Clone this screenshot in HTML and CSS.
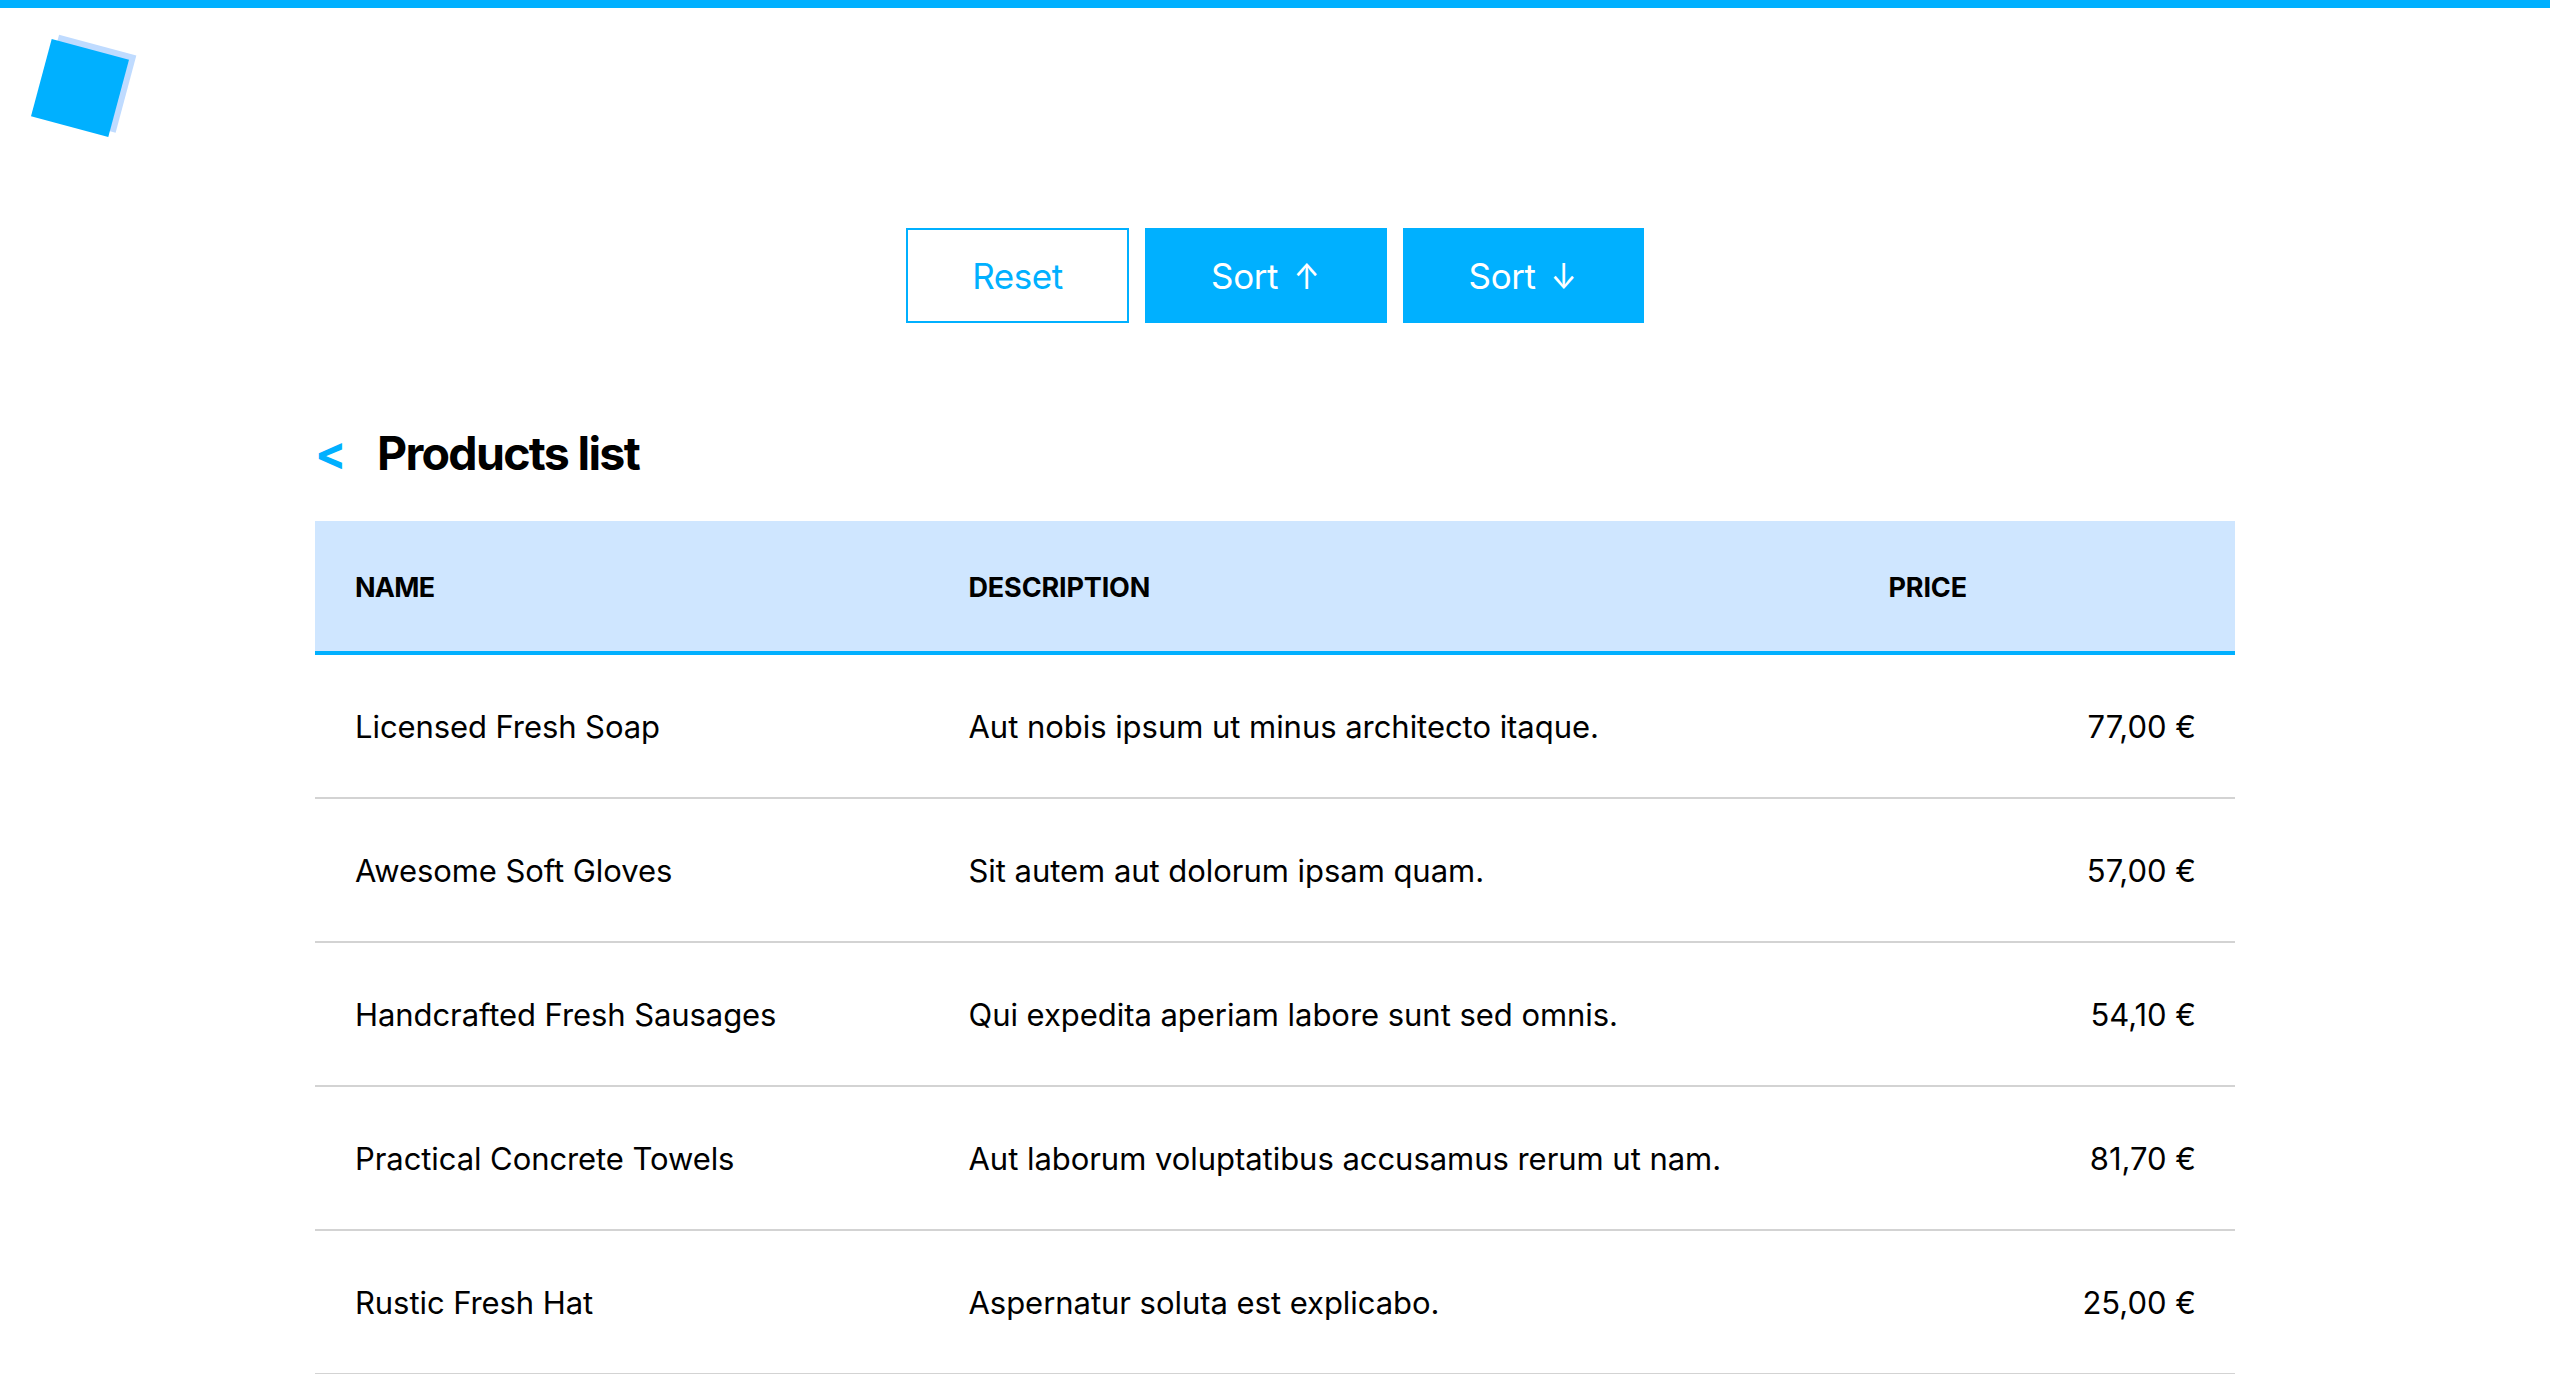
FILE: index.html
```
<!DOCTYPE html>
<html lang="en">
<head>
<meta charset="utf-8">
<title>Products list</title>
<link rel="stylesheet" href="styles.css">
</head>
<body>
<header class="header">
  <a class="logo" href="#" aria-label="Home"></a>
</header>
<main class="container">
  <div class="actions">
    <button class="button button-outline" type="button">Reset</button>
    <button class="button" type="button">Sort <span class="arrow">↑</span></button>
    <button class="button" type="button">Sort <span class="arrow">↓</span></button>
  </div>
  <h1 class="title"><a class="back" href="#">&lt;</a>Products list</h1>
  <table class="products">
    <thead>
      <tr><th class="name">Name</th><th class="description">Description</th><th class="price">Price</th></tr>
    </thead>
    <tbody>
      <tr><td class="name">Licensed Fresh Soap</td><td>Aut nobis ipsum ut minus architecto itaque.</td><td class="price">77,00 €</td></tr>
      <tr><td class="name">Awesome Soft Gloves</td><td>Sit autem aut dolorum ipsam quam.</td><td class="price">57,00 €</td></tr>
      <tr><td class="name">Handcrafted Fresh Sausages</td><td>Qui expedita aperiam labore sunt sed omnis.</td><td class="price">54,10 €</td></tr>
      <tr><td class="name">Practical Concrete Towels</td><td>Aut laborum voluptatibus accusamus rerum ut nam.</td><td class="price">81,70 €</td></tr>
      <tr><td class="name">Rustic Fresh Hat</td><td>Aspernatur soluta est explicabo.</td><td class="price">25,00 €</td></tr>
    </tbody>
  </table>
</main>
</body>
</html>
```
FILE: styles.css
```
* {
  box-sizing: border-box;
}

body {
  margin: 0;
  height: 1374px;
  overflow: hidden;
  border-top: 8px solid #00b0ff;
  background: #fff;
  color: #000;
  font-family: Inter, "Liberation Sans", sans-serif;
}

a {
  color: #00b0ff;
  text-decoration: none;
}

.header {
  padding: 40px;
}

.logo {
  display: block;
  width: 80px;
  height: 80px;
  background: #00b0ff;
  box-shadow: 6px -6px #bfdbff;
  transform: rotate(15deg);
}

.container {
  width: 1920px;
  margin: 0 auto;
}

.actions {
  display: flex;
  justify-content: center;
  gap: 16px;
  margin-top: 60px;
}

.button {
  width: 241.5px;
  height: 95px;
  padding: 0;
  border: 2px solid #00b0ff;
  background: #00b0ff;
  color: #fff;
  font: 400 35px Inter, "Liberation Sans", sans-serif;
  letter-spacing: -0.4px;
}

.button-outline {
  width: 223px;
  background: #fff;
  color: #00b0ff;
}

.arrow {
  display: inline-block;
  margin-left: 4px;
  transform: scaleX(0.9);
}

.title {
  display: flex;
  height: 60px;
  margin: 100px 0 38px;
  font-size: 46.5px;
  line-height: 60px;
  font-weight: 700;
  letter-spacing: -1.7px;
}

.back {
  width: 62px;
}

.products {
  width: 100%;
  table-layout: fixed;
  border-collapse: separate;
  border-spacing: 0;
}

.products th {
  height: 134px;
  padding: 2px 40px 0;
  border-bottom: 4px solid #00b0ff;
  background: #cfe6ff;
  font-size: 27px;
  font-weight: 700;
  letter-spacing: -0.15px;
  text-align: left;
  text-transform: uppercase;
}

.products th.name {
  width: 613.5px;
  letter-spacing: -0.75px;
}

.products th.description {
  width: 920px;
}

.products td {
  height: 144px;
  padding: 0 40px;
  border-bottom: 2px solid #d3d3d3;
  font-size: 31px;
  letter-spacing: -0.04px;
}

.products td.name {
  letter-spacing: -0.08px;
}

.products td.price {
  padding-right: 39px;
  letter-spacing: 0;
  text-align: right;
}
```
